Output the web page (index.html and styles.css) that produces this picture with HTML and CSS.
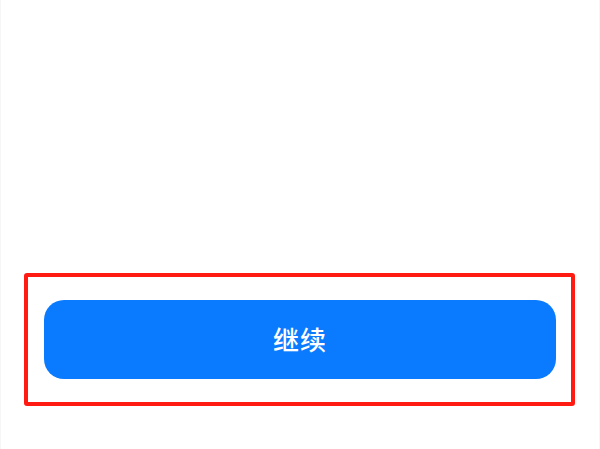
FILE: index.html
```html
<!DOCTYPE html>
<html lang="zh-CN">
<head>
<meta charset="utf-8">
<title>继续</title>
<link rel="stylesheet" href="styles.css">
</head>
<body>
<div class="screen">
  <div class="spacer"></div>
  <div class="highlight">
    <button class="continue-btn">继续</button>
  </div>
</div>
</body>
</html>
```
FILE: styles.css
```css
html, body {
  margin: 0;
  padding: 0;
  background: #ffffff;
}
.screen {
  width: 600px;
  height: 449px;
  display: flex;
  flex-direction: column;
  box-sizing: border-box;
  border-left: 1px solid #f6f6f6;
  border-right: 1px solid #f6f6f6;
  font-family: "Noto Sans CJK SC", "Noto Sans", sans-serif;
}
.spacer {
  flex: 1;
}
.highlight {
  margin: 0 24px 43px 23px;
  height: 133px;
  box-sizing: border-box;
  border: 4px solid #ff1a12;
  border-radius: 3px;
  padding: 23px 15px 0 16px;
}
.continue-btn {
  display: flex;
  align-items: center;
  justify-content: center;
  width: 100%;
  height: 79px;
  border: none;
  border-radius: 20px;
  background: #0a7bff;
  color: #ffffff;
  font-family: "Noto Sans CJK SC", "Noto Sans", sans-serif;
  font-size: 26px;
  font-weight: 500;
  letter-spacing: 1px;
  padding: 0 0 2px 0;
}
```
